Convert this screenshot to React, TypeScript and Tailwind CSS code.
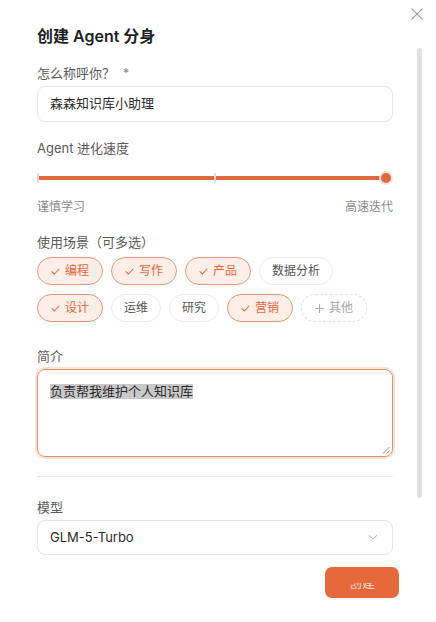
const font = "font-['Inter','Noto_Sans_CJK_SC',sans-serif]";

type Scene = { label: string; on?: boolean; add?: boolean };

const row1: Scene[] = [
  { label: "编程", on: true },
  { label: "写作", on: true },
  { label: "产品", on: true },
  { label: "数据分析" },
];

const row2: Scene[] = [
  { label: "设计", on: true },
  { label: "运维" },
  { label: "研究" },
  { label: "营销", on: true },
  { label: "其他", add: true },
];

function Check() {
  return (
    <svg width="9" height="7" viewBox="0 0 9 7" fill="none">
      <path d="M1 3.6 L3.4 6 L8 1" stroke="#e0693f" strokeWidth="1.1" strokeLinecap="round" strokeLinejoin="round" />
    </svg>
  );
}

function Plus() {
  return (
    <svg width="9" height="9" viewBox="0 0 9 9" fill="none">
      <path d="M4.5 0.5 V8.5 M0.5 4.5 H8.5" stroke="#b0b0b0" strokeWidth="1.1" strokeLinecap="round" />
    </svg>
  );
}

function Chip({ label, on, add }: Scene) {
  if (on) {
    return (
      <div className="flex h-[28px] items-center gap-[5px] rounded-full border border-[#e29a7d] bg-[#fdeee7] px-[13px] text-[12px] text-[#e0693f]">
        <Check />
        {label}
      </div>
    );
  }
  if (add) {
    return (
      <div className="flex h-[28px] items-center gap-[5px] rounded-full border border-dashed border-[#e2e2e2] px-[13px] text-[12px] text-[#a8a8a8]">
        <Plus />
        {label}
      </div>
    );
  }
  return (
    <div className="flex h-[28px] items-center rounded-full border border-[#ebebeb] bg-white px-3 text-[12px] text-[#555]">
      {label}
    </div>
  );
}

function Label({ children, className = "" }: { children: React.ReactNode; className?: string }) {
  return <div className={`text-[13px] leading-[20px] text-[#5a5a5a] ${className}`}>{children}</div>;
}

export default function App() {
  return (
    <div className={`relative flex h-[622px] w-[436px] flex-col overflow-hidden bg-white ${font}`}>
      <button className="absolute right-[13px] top-[8px] text-[#9a9a9a]">
        <svg width="12" height="12" viewBox="0 0 12 12" fill="none">
          <path d="M0.8 0.8 L11.2 11.2 M11.2 0.8 L0.8 11.2" stroke="currentColor" strokeWidth="1.2" strokeLinecap="round" />
        </svg>
      </button>

      <h1 className="pl-[37px] pt-[24px] text-[16px] font-semibold leading-[24px] text-[#1f1f1f]">
        创建 Agent 分身
      </h1>

      <div className="flex">
        <div className="w-[393px] pl-[37px]">
          <Label className="mt-[15px]">
            怎么称呼你？ <span className="ml-1 text-[#888]">*</span>
          </Label>
          <div className="mt-[3px] flex h-[36px] items-center rounded-[8px] border border-[#e6e6e6] px-3 text-[13px] text-[#2b2b2b]">
            森森知识库小助理
          </div>

          <Label className="mt-[16px]">Agent 进化速度</Label>
          <div className="relative mt-[10px] flex h-[20px] items-center pr-[2px]">
            <div className="h-[4px] flex-1 rounded-full bg-[#e0683f]" />
            <div className="-ml-[2px] h-[10px] w-[10px] shrink-0 rounded-full bg-[#e0683f] ring-2 ring-[#fde4da]" />
            <div className="absolute left-0 top-[5px] h-[10px] w-[2px] rounded-full bg-[#e9d6cf]" />
            <div className="absolute left-[177px] top-[5px] h-[10px] w-[2px] rounded-full bg-[#e9d6cf]" />
          </div>
          <div className="mt-[10px] flex justify-between text-[12px] leading-[18px] text-[#8a8a8a]">
            <span>谨慎学习</span>
            <span>高速迭代</span>
          </div>

          <Label className="mt-[16px]">使用场景（可多选）</Label>
          <div className="mt-[5px] flex flex-col gap-[9px]">
            <div className="flex gap-2">
              {row1.map((s) => (
                <Chip key={s.label} {...s} />
              ))}
            </div>
            <div className="flex gap-2">
              {row2.map((s) => (
                <Chip key={s.label} {...s} />
              ))}
            </div>
          </div>

          <Label className="mt-[24px]">简介</Label>
          <div className="relative mt-[3px] h-[88px] rounded-[8px] border border-[#e8906c] px-3 pt-[14px] text-[13px] leading-[15px] text-[#2b2b2b] ring-2 ring-[#fce3d8]">
            <span className="inline-block bg-[#c9c9c9] leading-[15px]">负责帮我维护个人知识库</span>
            <svg className="absolute bottom-[2px] right-[2px]" width="8" height="8" viewBox="0 0 8 8" fill="none">
              <path d="M7.5 1 L1 7.5 M7.5 4.5 L4.5 7.5" stroke="#8a8a8a" strokeWidth="0.9" />
            </svg>
          </div>

          <div className="mt-[19px] h-px bg-[#e9e9e9]" />

          <Label className="mt-[20px]">模型</Label>
          <div className="mt-[3px] flex h-[35px] items-center justify-between rounded-[8px] border border-[#e6e6e6] pl-3 pr-[15px] text-[13px] text-[#2b2b2b]">
            <span>GLM-5-Turbo</span>
            <svg width="8" height="5" viewBox="0 0 8 5" fill="none">
              <path d="M0.5 0.8 L4 4.2 L7.5 0.8" stroke="#a0a0a0" strokeWidth="1" strokeLinecap="round" strokeLinejoin="round" />
            </svg>
          </div>
        </div>

        <div className="ml-[24px]">
          <div className="h-[450px] w-[5px] rounded-full bg-[#e1e1e1]" />
        </div>
      </div>

      <div className="mt-[12px] flex justify-end pr-[37px]">
        <button className="flex h-[31px] w-[74px] items-end justify-center rounded-[7px] bg-[#e6693b] pb-[8px]">
          <span className="block h-[7px] w-[27px] overflow-hidden rounded-t-full">
            <span className="-mt-[9px] block text-[13px] leading-[16px] text-[#fcd9c8]">创建</span>
          </span>
        </button>
      </div>
    </div>
  );
}
